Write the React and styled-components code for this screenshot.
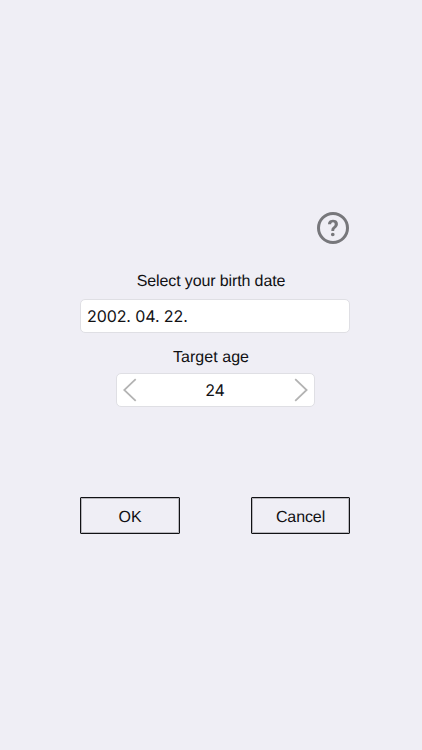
import React, { useState } from 'react';
import styled, { createGlobalStyle, ThemeProvider } from 'styled-components';

const theme = {
  clrBackground: '#efeef5',
  clrField: '#ffffff',
  clrBorder: '#dfdfe4',
  clrText: '#111114',
  clrHelp: '#77777b',
  clrArrow: '#b3b3b3',
  ffLabel: "'Liberation Sans', Arial, sans-serif",
  ffValue: "Inter, 'Liberation Sans', sans-serif",
};

const GlobalStyle = createGlobalStyle`
  * {
    box-sizing: border-box;
  }
  body {
    margin: 0;
    background-color: ${({ theme }) => theme.clrBackground};
    text-rendering: geometricPrecision;
  }
`;

const Container = styled.main`
  height: 750px;
  width: 422px;
  padding: 212px 72px 0 80px;
  display: flex;
  flex-direction: column;
  align-items: center;
  background-color: ${({ theme }) => theme.clrBackground};
  color: ${({ theme }) => theme.clrText};
  font-family: ${({ theme }) => theme.ffLabel};
  font-size: 16px;
`;

const HelpButton = styled.button`
  align-self: flex-end;
  width: 32px;
  height: 32px;
  margin-right: 1px;
  padding: 2px 0 0;
  display: flex;
  align-items: center;
  justify-content: center;
  border: 3px solid ${({ theme }) => theme.clrHelp};
  border-radius: 50%;
  background: none;
  color: ${({ theme }) => theme.clrHelp};
  font-family: Roboto, sans-serif;
  font-size: 22.5px;
  font-weight: 700;
  line-height: 26px;
  text-rendering: geometricPrecision;
  will-change: transform;
`;

const Label = styled.label`
  height: 20px;
  margin-top: ${({ $top }) => $top};
  margin-right: 8px;
  letter-spacing: ${({ $spacing }) => $spacing};
  line-height: 20px;
  white-space: nowrap;
`;

const Field = styled.div`
  width: ${({ $width }) => $width};
  height: 34px;
  margin-top: ${({ $top }) => $top};
  padding: 0 6px;
  display: flex;
  align-items: center;
  justify-content: space-between;
  border: 1px solid ${({ theme }) => theme.clrBorder};
  border-radius: 5px;
  background-color: ${({ theme }) => theme.clrField};
  font-family: ${({ theme }) => theme.ffValue};
`;

const DateValue = styled.span`
  font-size: 16px;
  letter-spacing: -0.1px;
`;

const Age = styled.span`
  font-size: 16px;
  letter-spacing: -0.2px;
  line-height: 20px;
`;

const ArrowButton = styled.button`
  width: 14px;
  height: 24px;
  padding: 0;
  border: none;
  background: none;

  svg {
    display: block;
    fill: none;
    stroke: ${({ theme }) => theme.clrArrow};
    stroke-width: 1.8;
  }
`;

const Actions = styled.div`
  width: 270px;
  margin-top: 90px;
  display: flex;
  justify-content: space-between;
`;

const ActionButton = styled.button`
  width: ${({ $width }) => $width};
  height: 37px;
  padding: 5px 0 0;
  border: 1px solid ${({ theme }) => theme.clrText};
  border-radius: 1px;
  background: none;
  box-shadow: inset 0 0 0 1px rgba(17, 17, 20, 0.25);
  color: inherit;
  font-family: inherit;
  font-size: 16px;
  letter-spacing: -0.1px;
  text-rendering: geometricPrecision;
`;

export default function App() {
  const [age, setAge] = useState(24);

  return (
    <ThemeProvider theme={theme}>
      <GlobalStyle />
      <Container>
        <HelpButton>?</HelpButton>
        <Label $top='28px' $spacing='-0.12px'>
          Select your birth date
        </Label>
        <Field $width='270px' $top='7px'>
          <DateValue>2002. 04. 22.</DateValue>
        </Field>
        <Label $top='15px' $spacing='0.05px'>
          Target age
        </Label>
        <Field $width='199px' $top='5px'>
          <ArrowButton onClick={() => setAge(age - 1)}>
            <svg width='14' height='24' viewBox='0 0 14 24'>
              <path d='M12.7 1.2 1.2 12l11.5 10.8' />
            </svg>
          </ArrowButton>
          <Age>{age}</Age>
          <ArrowButton onClick={() => setAge(age + 1)}>
            <svg width='14' height='24' viewBox='-1 0 14 24' overflow='visible'>
              <path d='M1.2 1.2 12.6 12 1.2 22.8' />
            </svg>
          </ArrowButton>
        </Field>
        <Actions>
          <ActionButton $width='100px'>OK</ActionButton>
          <ActionButton $width='99px'>Cancel</ActionButton>
        </Actions>
      </Container>
    </ThemeProvider>
  );
}
